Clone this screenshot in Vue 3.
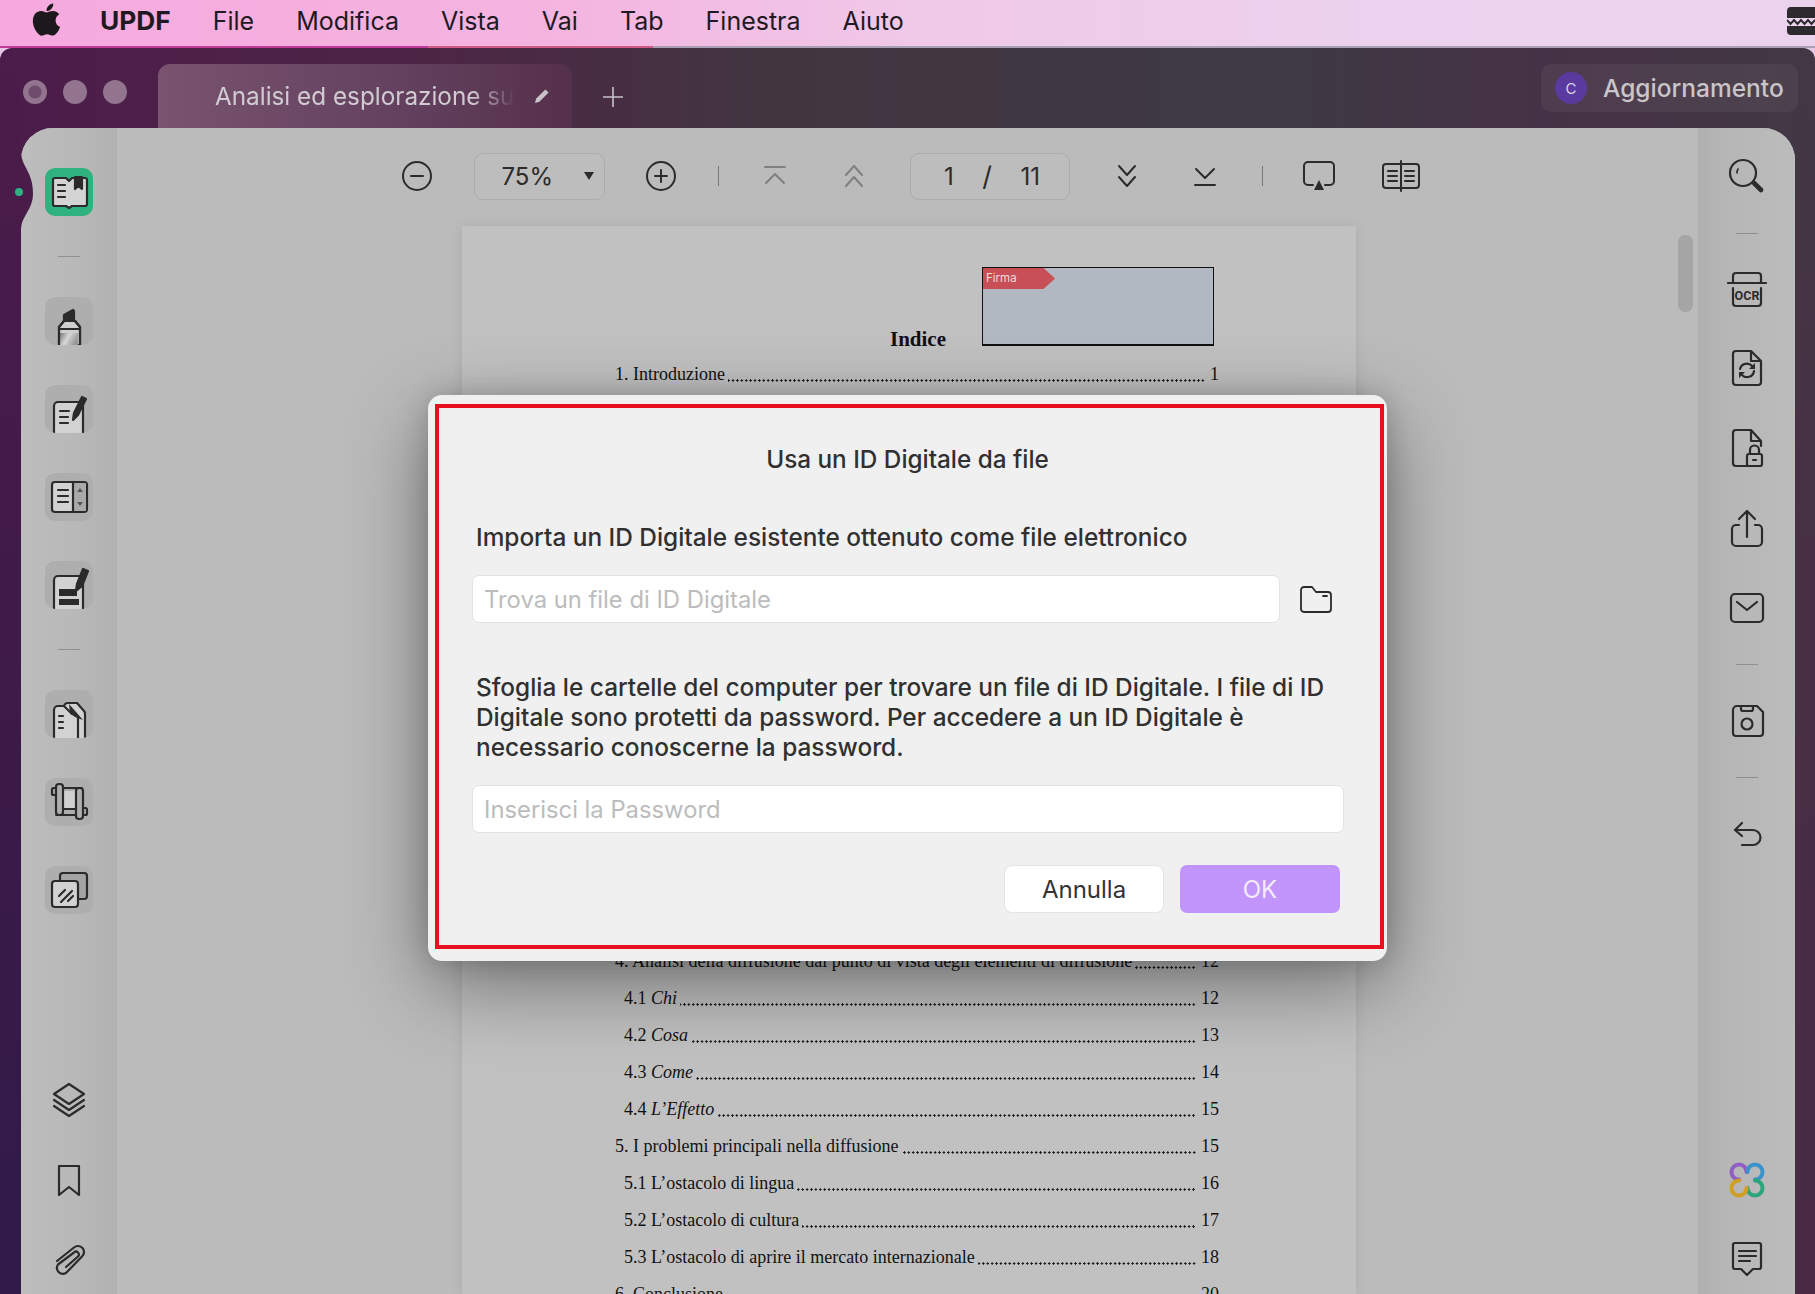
<script setup>
const menuItems = ["File", "Modifica", "Vista", "Vai", "Tab", "Finestra", "Aiuto"];

const tocTop = [{ label: "1. Introduzione", page: "1" }];
const tocBottom = [
  { label: "4. Analisi della diffusione dal punto di vista degli elementi di diffusione", page: "12" },
  { num: "4.1", em: "Chi", page: "12", sub: true },
  { num: "4.2", em: "Cosa", page: "13", sub: true },
  { num: "4.3", em: "Come", page: "14", sub: true },
  { num: "4.4", em: "L’Effetto", page: "15", sub: true },
  { label: "5. I problemi principali nella diffusione", page: "15" },
  { label: "5.1 L’ostacolo di lingua", page: "16", sub: true },
  { label: "5.2 L’ostacolo di cultura", page: "17", sub: true },
  { label: "5.3 L’ostacolo di aprire il mercato internazionale", page: "18", sub: true },
  { label: "6. Conclusione", page: "20" }
];
</script>

<template>
  <div class="app">
    <!-- barra menu macOS -->
    <header class="menubar">
      <svg class="apple" viewBox="0 0 24 24"><path d="M17.05 20.28c-.98.95-2.05.8-3.08.35-1.09-.46-2.09-.48-3.24 0-1.44.62-2.2.44-3.06-.35C2.79 15.25 3.51 7.59 9.05 7.31c1.35.07 2.29.74 3.08.8 1.18-.24 2.31-.93 3.57-.84 1.51.12 2.65.72 3.4 1.8-3.12 1.87-2.38 5.98.48 7.13-.57 1.5-1.31 2.99-2.54 4.09zM12.03 7.25c-.15-2.23 1.66-4.07 3.74-4.25.29 2.58-2.34 4.5-3.74 4.25z" /></svg>
      <span class="brand">UPDF</span>
      <span v-for="item in menuItems" :key="item" class="menu-item">{{ item }}</span>
      <svg class="notch" viewBox="0 0 28 28">
        <path d="M4 0h24v11H0V4a4 4 0 0 1 4-4zM0 19h28v9H4a4 4 0 0 1-4-4z" fill="#2c2a2e" />
        <path d="M0 13l3.5 4 3.5-4 3.5 4 3.5-4 3.5 4 3.5-4 3.5 4 3.5-4" fill="none" stroke="#2c2a2e" stroke-width="2" />
      </svg>
    </header>

    <div class="window">
      <div class="titlebar">
        <div class="lights">
          <span class="light first"></span>
          <span class="light"></span>
          <span class="light"></span>
        </div>
        <div class="tab">
          <span class="tab-title">Analisi ed esplorazione sul</span>
          <svg class="tab-pencil" viewBox="0 0 18 18"><path d="M2 16l1.2-4.4L12.4 2.4l3.2 3.2-9.2 9.2z" fill="#c9c2c8" /></svg>
        </div>
        <svg class="tab-plus" viewBox="0 0 24 24"><path d="M12 2v20M2 12h20" stroke="#c8c2c8" stroke-width="1.6" fill="none" /></svg>
        <div class="upgrade">
          <span class="avatar">C</span>
          <span class="upgrade-text">Aggiornamento</span>
        </div>
      </div>

      <div class="panel">
        <!-- colonna sinistra -->
        <nav class="rail-left">
          <div class="tool-box active">
            <svg class="ic" viewBox="0 0 48 48">
              <path d="M10 10h11l3 3 3-3h13a2 2 0 0 1 2 2v24a2 2 0 0 1-2 2H27l-3 2-3-2H10a2 2 0 0 1-2-2V12a2 2 0 0 1 2-2z" fill="#d4d4d4" />
              <path d="M13 17h7M13 23h7M13 29h7" />
              <path d="M30 9h7v12l-3.5-3-3.5 3z" fill="#2b2b2b" />
            </svg>
          </div>
          <span class="rail-line"></span>
          <div class="tool-box">
            <svg class="ic" viewBox="0 0 48 48">
              <defs>
                <linearGradient id="marker" x1="0" y1="0" x2="1" y2="0.4">
                  <stop offset="0" stop-color="#777" />
                  <stop offset="0.5" stop-color="#d8d8d8" />
                  <stop offset="1" stop-color="#999" />
                </linearGradient>
              </defs>
              <path d="M14 48V30l5-6h11l5 6v18z" fill="#cfcfcf" />
              <path d="M15 36h18v12H15z" fill="url(#marker)" stroke="none" />
              <path d="M14 48V30l5-6h11l5 6v18" />
              <path d="M14 32h21" />
              <path d="M19 24v-6l9-5 1 1v10z" fill="#2b2b2b" />
            </svg>
          </div>
          <div class="tool-box">
            <svg class="ic" viewBox="0 0 48 48">
              <path d="M9 48V21a4 4 0 0 1 4-4h21a4 4 0 0 1 4 4v27" fill="#d2d2d2" />
              <path d="M15 26h9M15 32h8M15 38h8" />
              <path d="M37 12l-8 16-1 7 5-5 8-16z" fill="#2b2b2b" />
            </svg>
          </div>
          <div class="tool-box">
            <svg class="ic" viewBox="0 0 48 48">
              <rect x="7" y="9" width="35" height="30" rx="3" fill="#d2d2d2" />
              <path d="M28 10h12a1 1 0 0 1 1 1v26a1 1 0 0 1-1 1H28z" fill="#a9a9a9" stroke="none" />
              <path d="M28 9v30M13 17h10M13 23h10M13 29h10" />
              <path d="M35 15l3 4h-6zM35 33l3-4h-6z" fill="#555" stroke="none" />
            </svg>
          </div>
          <div class="tool-box">
            <svg class="ic" viewBox="0 0 48 48">
              <path d="M9 48V19a4 4 0 0 1 4-4h21a4 4 0 0 1 4 4v29" fill="#d2d2d2" />
              <path d="M14 28h18v7H14z" fill="#2b2b2b" stroke="none" />
              <path d="M14 38h20v6H14z" fill="#2b2b2b" stroke="none" />
              <path d="M38 8l-6 15-1 7 6-5 6-15z" fill="#2b2b2b" />
            </svg>
          </div>
          <span class="rail-line"></span>
          <div class="tool-box">
            <svg class="ic" viewBox="0 0 48 48">
              <path d="M19 16a4 4 0 0 1 4-3h9l7 8a4 4 0 0 1 1 3v24H9V20a4 4 0 0 1 4-4z" fill="#d2d2d2" stroke="none" />
              <path d="M9 48V20a4 4 0 0 1 4-4h6M19 16a4 4 0 0 1 4-3h9l7 8a4 4 0 0 1 1 3v24M33 48V28a3 3 0 0 0-2-3l-4-1-8-8" />
              <path d="M24 14l14 16-8-3-5-4z" fill="#2b2b2b" stroke="none" />
              <path d="M14 26h4M14 32h4M14 38h4" />
            </svg>
          </div>
          <div class="tool-box">
            <svg class="ic" viewBox="0 0 48 48">
              <rect x="18" y="13" width="13" height="18" fill="#d0d0d0" stroke="none" />
              <path d="M11 10h26M11 37h27M18 31h13M31 13v18" stroke-width="1.800" />
              <path d="M18 31l-6 6M31 16l6-5" stroke-width="1.800" />
              <rect x="11" y="6" width="7" height="31" rx="3" fill="#aeaeae" />
              <rect x="31" y="10" width="7" height="31" rx="3" fill="#aeaeae" />
              <path d="M11 10H8.500a1.500 1.500 0 0 0-1.500 1.500v4a1.500 1.500 0 0 0 1.500 1.500H11M38 30h2.500a1.500 1.500 0 0 1 1.500 1.500v4a1.500 1.500 0 0 1-1.500 1.500H38" />
            </svg>
          </div>
          <div class="tool-box">
            <svg class="ic" viewBox="0 0 48 48">
              <rect x="15" y="7" width="27" height="26" rx="3" fill="#a4a4a4" />
              <rect x="7" y="15" width="26" height="26" rx="3" fill="#d2d2d2" />
              <path d="M14 30l6-6M16 36l11-11M23 35l5-5" />
            </svg>
          </div>
          <div class="rail-bottom">
            <svg class="ic-plain" viewBox="0 0 40 40">
              <path d="M20 4l15 10-15 10L5 14z" />
              <path d="M5 20l15 10 15-10M5 26l15 10 15-10" />
            </svg>
            <svg class="ic-plain" viewBox="0 0 40 40">
              <path d="M10 6h20v29l-10-8-10 8z" />
            </svg>
            <svg class="ic-plain" viewBox="0 0 40 40">
              <path d="M8 21L25 7.500a6 6 0 0 1 8 9L17 33a6 6 0 0 1-8-8.500L25 12.500a2.800 2.800 0 0 1 4 4L17 27" />
            </svg>
          </div>
        </nav>

        <!-- area documento -->
        <main class="doc-area">
          <div class="toolbar">
            <svg class="tb" viewBox="0 0 32 32"><circle cx="16" cy="16" r="14" /><path d="M10 16h12" /></svg>
            <div class="field zoom-field">
              <span>75%</span>
              <i class="caret"></i>
            </div>
            <svg class="tb" viewBox="0 0 32 32"><circle cx="16" cy="16" r="14" /><path d="M10 16h12M16 10v12" /></svg>
            <span class="tb-sep"></span>
            <svg class="tb muted" viewBox="0 0 32 32"><path d="M6 7h20M7 23l9-9 9 9" /></svg>
            <svg class="tb muted wide" viewBox="0 0 32 32"><path d="M8 15l8-9 8 9M8 26l8-9 8 9" /></svg>
            <div class="field page-field">
              <span>1</span><span class="slash">/</span><span>11</span>
            </div>
            <svg class="tb" viewBox="0 0 32 32"><path d="M8 6l8 9 8-9M8 17l8 9 8-9" /></svg>
            <svg class="tb wide" viewBox="0 0 32 32"><path d="M7 9l9 9 9-9M6 25h20" /></svg>
            <span class="tb-sep"></span>
            <svg class="tb" viewBox="0 0 32 32">
              <path d="M10 25H5a4 4 0 0 1-4-4V6a4 4 0 0 1 4-4h22a4 4 0 0 1 4 4v15a4 4 0 0 1-4 4h-5" />
              <path d="M16 20l5 10H11z" fill="#2b2b2b" stroke="none" />
            </svg>
            <svg class="tb read wide" viewBox="0 0 38 32">
              <path d="M19 1v30M19 4H4a3 3 0 0 0-3 3v18a3 3 0 0 0 3 3h15M19 4h15a3 3 0 0 1 3 3v18a3 3 0 0 1-3 3H19" />
              <path d="M6 11h9M6 16h9M6 21h9M23 11h9M23 16h9M23 21h9" />
            </svg>
          </div>

          <div class="page">
            <div class="sign-field">
              <span class="sign-tag">Firma</span>
            </div>
            <div class="page-title">Indice</div>
            <div v-for="row in tocTop" :key="row.label" class="toc-row">
              <span class="toc-label">{{ row.label }}</span>
              <span class="toc-dots"></span>
              <span class="toc-num">{{ row.page }}</span>
            </div>
            <div class="toc-gap"></div>
            <div v-for="row in tocBottom" :key="row.page + (row.label || row.em)" class="toc-row" :class="{ sub: row.sub }">
              <span class="toc-label">
                <template v-if="row.em">{{ row.num }} <em>{{ row.em }}</em></template>
                <template v-else>{{ row.label }}</template>
              </span>
              <span class="toc-dots"></span>
              <span class="toc-num">{{ row.page }}</span>
            </div>
          </div>
          <div class="scroll-thumb"></div>
        </main>

        <!-- colonna destra -->
        <aside class="rail-right">
          <svg class="ic-plain search" viewBox="0 0 40 40">
            <circle cx="16" cy="18" r="13" />
            <path d="M11 14a7 7 0 0 0-1 4" stroke-width="1.6" />
            <path d="M27 28l7 7" stroke-width="4.6" />
          </svg>
          <span class="rail-line nudge"></span>
          <div class="right-tools">
            <svg class="ic-plain" viewBox="0 0 40 40">
              <path d="M6 15V8a3 3 0 0 1 3-3h22a3 3 0 0 1 3 3v7M1 15h38M6 20v15a3 3 0 0 0 3 3h22a3 3 0 0 0 3-3V20" />
              <text x="20" y="31.500" text-anchor="middle" class="ocr-text">OCR</text>
            </svg>
            <svg class="ic-plain" viewBox="0 0 40 40">
              <path d="M9 3h15l10 10v21a3 3 0 0 1-3 3H9a3 3 0 0 1-3-3V6a3 3 0 0 1 3-3zM24 3v10h10" />
              <path d="M13 21a7 7 0 0 1 12-3l2 2M27 23a7 7 0 0 1-12 4l-2-2" />
              <path d="M28 15v6h-6zM12 30v-6h6z" fill="#2b2b2b" stroke="none" />
            </svg>
            <svg class="ic-plain" viewBox="0 0 40 40">
              <path d="M20 38H9a3 3 0 0 1-3-3V5a3 3 0 0 1 3-3h15l10 11v5M24 2v11h10" />
              <rect x="20" y="26" width="15" height="12" rx="2" />
              <path d="M23 26v-4a4.500 4.500 0 0 1 9 0v4M26 32h3" />
            </svg>
            <svg class="ic-plain" viewBox="0 0 40 40">
              <path d="M12 17H9a4 4 0 0 0-4 4v13a4 4 0 0 0 4 4h22a4 4 0 0 0 4-4V21a4 4 0 0 0-4-4h-3" />
              <path d="M20 29V4M12 11l8-8 8 8" />
            </svg>
            <svg class="ic-plain" viewBox="0 0 40 40">
              <rect x="4" y="6" width="32" height="28" rx="4" />
              <path d="M10 14l10 8 10-8" />
            </svg>
          </div>
          <span class="rail-line"></span>
          <svg class="ic-plain" viewBox="0 0 40 40">
            <path d="M10 5h20l6 6v21a3 3 0 0 1-3 3H9a3 3 0 0 1-3-3V9a4 4 0 0 1 4-4z" />
            <path d="M14 5v3a2 2 0 0 0 2 2h8a2 2 0 0 0 2-2V5" />
            <circle cx="20" cy="23" r="5.500" />
          </svg>
          <span class="rail-line"></span>
          <svg class="ic-plain" viewBox="0 0 40 40">
            <path d="M15 9L8 16l7 6" />
            <path d="M8 16h18a6.500 6.500 0 0 1 0 15H15" />
          </svg>
          <div class="right-bottom">
            <svg class="ic-plain clover" viewBox="0 0 36 36">
              <path d="M17.500 10A7.500 7.500 0 1 0 10 17.500" stroke="#8f5fc4" />
              <path d="M26 17.500A7.500 7.500 0 1 0 18.500 10" stroke="#3a93c8" />
              <path d="M18.500 26A7.500 7.500 0 1 0 26 18.500" stroke="#2aa67a" />
              <path d="M10 18.500A7.500 7.500 0 1 0 17.500 26" stroke="#cfa022" />
            </svg>
            <svg class="ic-plain" viewBox="0 0 40 40">
              <path d="M8 5h24a2 2 0 0 1 2 2v22a2 2 0 0 1-2 2h-6l-6 6-6-6H8a2 2 0 0 1-2-2V7a2 2 0 0 1 2-2z" />
              <path d="M12 13h17M12 18h17M12 23h11" />
            </svg>
          </div>
        </aside>
      </div>

      <svg class="notch-shape" viewBox="0 0 14 80"><path d="M0 0C0 16 12 20 12 42 12 60 0 64 0 80z" fill="#4a1c4a" /></svg>
      <span class="rail-dot"></span>
    </div>

    <!-- dialogo -->
    <div class="dialog">
      <h3 class="dialog-title">Usa un ID Digitale da file</h3>
      <p class="dialog-text first">Importa un ID Digitale esistente ottenuto come file elettronico</p>
      <div class="file-row">
        <input class="text-input" type="text" placeholder="Trova un file di ID Digitale" />
        <svg class="folder" viewBox="0 0 32 28">
          <path d="M1 5a3 3 0 0 1 3-3h8l4 5h12a3 3 0 0 1 3 3v14a3 3 0 0 1-3 3H4a3 3 0 0 1-3-3z" />
          <path d="M23 11h4" />
        </svg>
      </div>
      <p class="dialog-text second">Sfoglia le cartelle del computer per trovare un file di ID Digitale. I file di ID Digitale sono protetti da password. Per accedere a un ID Digitale è necessario conoscerne la password.</p>
      <input class="text-input full" type="password" placeholder="Inserisci la Password" />
      <div class="dialog-actions">
        <button class="btn cancel">Annulla</button>
        <button class="btn ok">OK</button>
      </div>
      <div class="red-frame"></div>
    </div>
  </div>
</template>

<style>
html, body {
  margin: 0;
  padding: 0;
  background: #2f1b48;
}
</style>

<style scoped>
.app {
  position: relative;
  width: 1815px;
  height: 1294px;
  overflow: hidden;
  display: flex;
  flex-direction: column;
  font-family: Inter, "Noto Sans", sans-serif;
  background: #e6c8e6;
}

/* barra menu */
.menubar {
  height: 41px;
  padding: 0 0 5px 25px;
  flex: none;
  display: flex;
  align-items: center;
  color: #1f1a22;
  font-size: 25px;
  background: linear-gradient(90deg, #f6a9de 0%, #f4b4e0 30%, #f0c8e8 50%, #ecd2ee 75%, #ebd3ee 100%);
  border-bottom: 2px solid #a9a0b0;
  border-image: linear-gradient(90deg, #c03a9a 0, #c03a9a 23.6%, #d05a88 23.6%, #d05a88 36%, #a9a0b4 36%) 1;
  box-sizing: content-box;
}
.apple {
  width: 43px;
  height: 43px;
  flex: none;
  fill: #1c181c;
  margin-right: 32px;
  margin-top: -3px;
}
.brand {
  font-size: 26.300px;
  font-weight: 700;
  margin-right: 42px;
}
.menu-item {
  margin-right: 42px;
}
.notch {
  width: 28px;
  height: 28px;
  margin-left: auto;
}

/* finestra */
.window {
  position: relative;
  flex: 1;
  display: flex;
  flex-direction: column;
  border-radius: 12px 12px 0 0;
  min-height: 0;
  background:
    linear-gradient(180deg, #4c1c4a 0%, #3e1a48 50%, #301b49 100%) left top / 21px 100% no-repeat,
    linear-gradient(180deg, transparent 0, #473044 40%, #482a43 100%) right top / 20px 100% no-repeat,
    linear-gradient(90deg, #4c1c4a 0%, #4d2446 22%, #423540 42%, #3e3a44 70%, #463246 85%, #423844 100%);
}
.titlebar {
  position: relative;
  height: 80px;
  flex: none;
  display: flex;
  align-items: flex-start;
  padding-top: 16px;
  box-sizing: border-box;
}
.lights {
  display: flex;
  gap: 16px;
  padding: 16px 0 0 23px;
  width: 158px;
  flex: none;
  box-sizing: border-box;
}
.light {
  width: 24px;
  height: 24px;
  border-radius: 50%;
  background: #92748f;
  flex: none;
}
.light.first {
  background: radial-gradient(circle, #6f4b6e 0 6px, #92748f 7px);
}
.tab {
  width: 414px;
  height: 64px;
  flex: none;
  border-radius: 12px 12px 0 0;
  background: linear-gradient(90deg, #79536f 0%, #644260 55%, #55304a 100%);
  display: flex;
  align-items: center;
  padding-left: 57px;
  box-sizing: border-box;
}
.tab-title {
  width: 300px;
  flex: none;
  white-space: nowrap;
  font-size: 24.300px;
  color: #d2ccd2;
  -webkit-mask-image: linear-gradient(90deg, #000 85%, transparent 100%);
  mask-image: linear-gradient(90deg, #000 85%, transparent 100%);
}
.tab-pencil {
  width: 18px;
  height: 18px;
  margin-left: 18px;
}
.tab-plus {
  width: 24px;
  height: 24px;
  margin: 21px 0 0 29px;
}
.upgrade {
  margin-left: auto;
  margin-right: 17px;
  width: 257px;
  height: 48px;
  border-radius: 10px;
  background: rgba(255, 255, 255, 0.05);
  display: flex;
  align-items: center;
  padding-left: 14px;
  box-sizing: border-box;
}
.avatar {
  width: 32px;
  height: 32px;
  border-radius: 50%;
  background: #5a3a9e;
  color: #d8d2e6;
  font-size: 15px;
  display: flex;
  align-items: center;
  justify-content: center;
  flex: none;
}
.upgrade-text {
  margin-left: 16px;
  font-size: 24.500px;
  font-weight: 500;
  color: #c9c5c9;
}

.panel {
  flex: 1;
  min-height: 0;
  display: flex;
  margin: 0 20px 0 21px;
  border-radius: 32px 32px 0 0;
  overflow: hidden;
  background: #bcbcbc;
}

/* colonne */
.rail-left {
  width: 96px;
  flex: none;
  display: flex;
  flex-direction: column;
  align-items: center;
  gap: 40px;
  padding: 40px 0 14px;
  box-sizing: border-box;
  background: linear-gradient(90deg, #bdbdbd 0%, #b8b8b8 60%, #b1b1b1 100%);
}
.tool-box {
  width: 48px;
  height: 48px;
  flex: none;
  border-radius: 10px;
  background: #aeaeae;
  overflow: hidden;
}
.tool-box.active {
  background: #2fb180;
}
.ic {
  display: block;
  width: 48px;
  height: 48px;
  fill: none;
  stroke: #2b2b2b;
  stroke-width: 2.2;
  stroke-linecap: round;
  stroke-linejoin: round;
}
.ic-plain {
  display: block;
  width: 40px;
  height: 40px;
  flex: none;
  fill: none;
  stroke: #2b2b2b;
  stroke-width: 2.2;
  stroke-linecap: round;
  stroke-linejoin: round;
}
.rail-line {
  display: block;
  width: 22px;
  height: 1px;
  flex: none;
  background: #8f8f8f;
}
.rail-bottom {
  margin-top: auto;
  display: flex;
  flex-direction: column;
  gap: 40px;
}

.rail-right {
  width: 97px;
  flex: none;
  display: flex;
  flex-direction: column;
  align-items: center;
  gap: 36px;
  padding: 27px 0 16px;
  box-sizing: border-box;
  background: linear-gradient(90deg, #b0b0b0 0%, #b6b6b6 30%, #bcbcbc 100%);
}
.rail-right .nudge {
  margin: 2px 0 -2px;
}
.right-tools {
  display: flex;
  flex-direction: column;
  gap: 40px;
}
.right-bottom {
  margin-top: auto;
  display: flex;
  flex-direction: column;
  align-items: center;
  gap: 40px;
}
.ocr-text {
  font-family: "Roboto", sans-serif;
  font-size: 12.500px;
  font-weight: 700;
  fill: #2b2b2b;
  stroke: none;
}
.ic-plain.clover {
  width: 36px;
  height: 36px;
  stroke-width: 4;
}

/* area documento */
.doc-area {
  position: relative;
  flex: 1;
  min-width: 0;
  display: flex;
  flex-direction: column;
  background: #bbbbbb;
}
.toolbar {
  height: 98px;
  padding: 0 0 2px 284px;
  flex: none;
  display: flex;
  align-items: center;
  gap: 40.500px;
  box-sizing: border-box;
}
.tb {
  width: 32px;
  height: 32px;
  flex: none;
  fill: none;
  stroke: #2b2b2b;
  stroke-width: 2;
  stroke-linecap: round;
  stroke-linejoin: round;
}
.tb.muted {
  stroke: #7f7f7f;
}
.tb.wide {
  margin-left: 6px;
}
.tb.read {
  width: 38px;
}
.tb-sep {
  width: 1px;
  height: 20px;
  flex: none;
  background: #777;
}
.field {
  height: 47px;
  flex: none;
  border: 1px solid #acacac;
  border-radius: 9px;
  background: #bdbdbd;
  box-sizing: border-box;
  display: flex;
  align-items: center;
  color: #2b2b2b;
  font-size: 24px;
}
.zoom-field {
  width: 131px;
  padding-left: 27px;
  position: relative;
}
.caret {
  position: absolute;
  right: 10px;
  top: 18px;
  width: 0;
  height: 0;
  border-left: 5px solid transparent;
  border-right: 5px solid transparent;
  border-top: 8px solid #2b2b2b;
}
.page-field {
  width: 160px;
  justify-content: space-between;
  padding: 0 29px 0 33px;
}
.slash {
  font-size: 27px;
}

/* pagina */
.page {
  position: relative;
  width: 894px;
  flex: 1;
  min-height: 0;
  margin-left: 345px;
  padding: 98px 137px 0 153px;
  box-sizing: border-box;
  overflow: hidden;
  background: #c1c1c1;
  font-family: "Liberation Serif", serif;
  font-size: 18px;
  color: #111;
  box-shadow: 0 0 12px rgba(0, 0, 0, 0.08);
}
.page-title {
  font-weight: 700;
  font-size: 21px;
  line-height: 30px;
  margin: 0 0 2px 275px;
}
.toc-row {
  height: 37px;
  display: flex;
  align-items: center;
  white-space: nowrap;
}
.toc-row.sub {
  padding-left: 9px;
}
.toc-label {
  flex: none;
  margin-right: 3px;
}
.toc-dots {
  flex: 1;
  min-width: 0;
  align-self: stretch;
  background-image: radial-gradient(circle, #1c1c1c 1px, transparent 1.300px);
  background-size: 4.400px 3px;
  background-repeat: repeat-x;
  background-position: right 0 top 23px;
}
.toc-num {
  flex: none;
  margin-left: 5px;
}
.toc-gap {
  height: 550px;
}
.sign-field {
  position: absolute;
  left: 520px;
  top: 41px;
  width: 232px;
  height: 79px;
  background: #b1b8c1;
  border: 1.5px solid #111;
  border-bottom-width: 2.5px;
  box-sizing: border-box;
}
.sign-tag {
  display: block;
  width: 72px;
  height: 21px;
  padding-left: 3px;
  box-sizing: border-box;
  background: #c84f56;
  clip-path: polygon(0 0, 84% 0, 100% 50%, 84% 100%, 0 100%);
  color: #eedadc;
  font-family: Inter, sans-serif;
  font-size: 11.500px;
  line-height: 20px;
}
.scroll-thumb {
  position: absolute;
  right: 5px;
  top: 107px;
  width: 15px;
  height: 77px;
  border-radius: 7px;
  background: #a5a5a5;
}

.notch-shape {
  position: absolute;
  left: 21px;
  top: 103px;
  width: 14px;
  height: 80px;
}
.rail-dot {
  position: absolute;
  left: 15px;
  top: 140px;
  width: 8px;
  height: 8px;
  border-radius: 50%;
  background: #2fb180;
}

/* dialogo */
.dialog {
  position: absolute;
  left: 428px;
  top: 395px;
  width: 959px;
  height: 566px;
  padding: 48px 44px 0 44px;
  box-sizing: border-box;
  border-radius: 14px;
  background: #f0f0f0;
  box-shadow: 0 24px 80px rgba(0, 0, 0, 0.42), 0 0 26px rgba(0, 0, 0, 0.16);
  color: #303030;
}
.dialog-title {
  margin: 0;
  font-size: 24.300px;
  font-weight: 500;
  line-height: 32px;
  text-align: center;
}
.dialog-text {
  margin: 0;
  padding-left: 4px;
  font-size: 24.400px;
  font-weight: 500;
  line-height: 30px;
}
.dialog-text.first {
  margin-top: 47px;
}
.dialog-text.second {
  margin-top: 49px;
}
.file-row {
  display: flex;
  align-items: center;
  margin-top: 23px;
}
.text-input {
  display: block;
  width: 808px;
  height: 48px;
  padding: 0 11px;
  box-sizing: border-box;
  border: 1px solid #e2e2e2;
  border-radius: 7px;
  background: #fff;
  outline: none;
  font-family: inherit;
  font-size: 23.800px;
}
.text-input::placeholder {
  color: #bcbcbc;
  opacity: 1;
}
.text-input.full {
  width: 872px;
  margin-top: 23px;
}
.folder {
  width: 32px;
  height: 28px;
  margin-left: 20px;
  fill: none;
  stroke: #2b2b2b;
  stroke-width: 1.8;
  stroke-linecap: round;
  stroke-linejoin: round;
}
.dialog-actions {
  display: flex;
  justify-content: flex-end;
  align-items: center;
  gap: 17px;
  margin-top: 32px;
  padding-right: 3px;
}
.btn {
  font-family: inherit;
  font-size: 24px;
  border: none;
  border-radius: 7px;
  padding: 0;
  cursor: pointer;
}
.btn.cancel {
  width: 158px;
  height: 46px;
  background: #fff;
  color: #333;
  box-shadow: 0 0 0 1px #e4e4e4;
}
.btn.ok {
  width: 160px;
  height: 48px;
  background: #c295fc;
  color: #f4ecff;
}
.red-frame {
  position: absolute;
  left: 7px;
  top: 9px;
  right: 3px;
  bottom: 12px;
  border: 4px solid #e8101e;
  pointer-events: none;
}
</style>
